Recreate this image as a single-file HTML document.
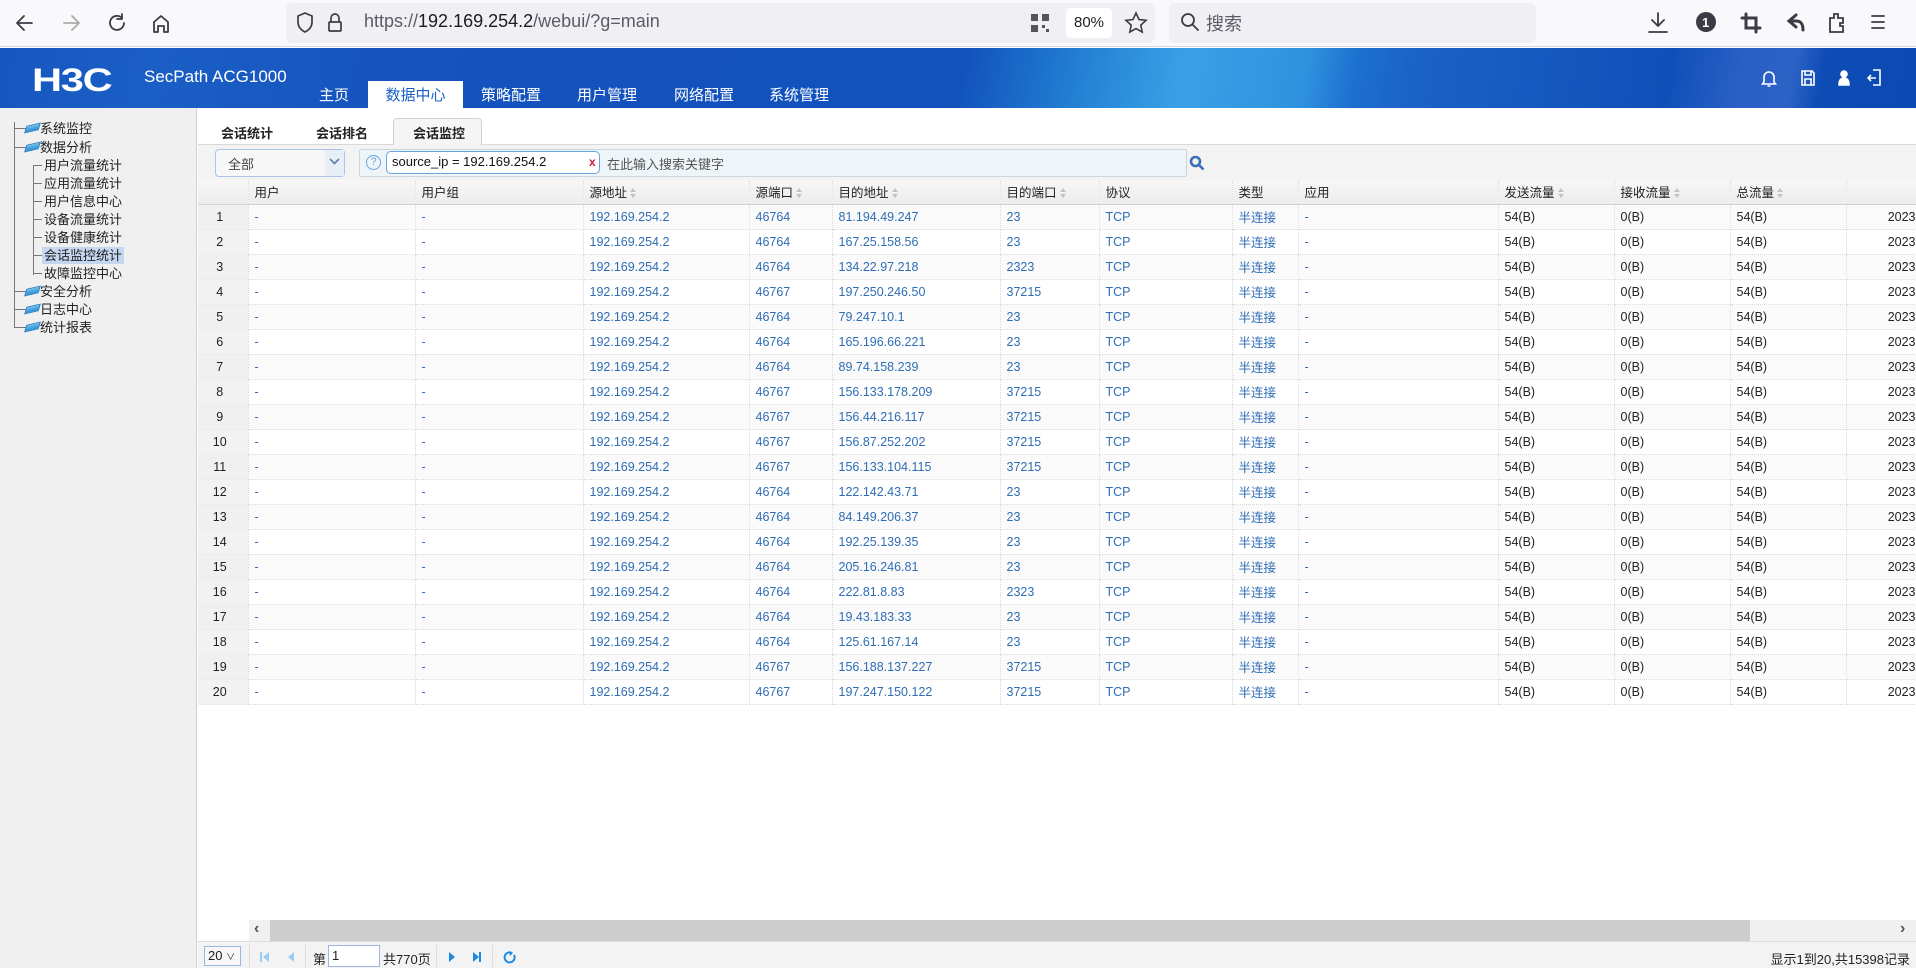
<!DOCTYPE html>
<html><head><meta charset="utf-8">
<style>
*{box-sizing:border-box;margin:0;padding:0}
body{width:1916px;height:968px;overflow:hidden;background:#fff;font-family:"Liberation Sans","Noto Sans CJK SC",sans-serif;font-size:13px;color:#222;position:relative}
.abs{position:absolute}
#bar{left:0;top:0;width:1916px;height:47px;background:#f9f9fb;border-bottom:1px solid #d6d6dc}
#url{left:286px;top:3px;width:869px;height:40px;background:#f0f0f4;border-radius:6px}
#srch{left:1169px;top:3px;width:367px;height:40px;background:#f0f0f4;border-radius:6px}
#hdr{left:0;top:48px;width:1916px;height:60px;background:linear-gradient(100deg,#1656c0 0px,#1a5fc6 150px,#1553bd 400px,#1152bc 950px,#2585d6 1080px,#3aa0e6 1170px,#2f92df 1290px,#1d6fcf 1340px,#1a62c6 1400px,#0f50b8 1650px,#2a60c5 1720px,#2c62c6 1770px,#0d4cb5 1800px,#0b4ab2 1916px)}
.nav{position:absolute;top:81px;height:27px;line-height:29px;color:#fff;font-size:15px;text-align:center}
#side{left:0;top:108px;width:197px;height:860px;background:#f0f0f0;border-right:1px solid #d0d0d0}
.ti{position:absolute;font-size:13px;color:#222;line-height:17px;white-space:nowrap}
.fold{position:absolute;width:13px;height:8px;background:linear-gradient(#6fc0ee,#2a8fd6);transform:skewX(-30deg) rotate(-15deg);border:1px solid #2a7cc0}
th,td{font-weight:normal;text-align:left;white-space:nowrap;overflow:hidden}
#tbl{position:absolute;left:198px;top:180px;border-collapse:collapse;table-layout:fixed;width:1718px}
#tbl th{height:24px;background:linear-gradient(#f7f7f7,#ececec);border-bottom:1px solid #d2d2d2;border-right:1px dotted #d8d8d8;padding-left:6px;font-size:12.5px;color:#222}
#tbl td{height:25px;border-bottom:1px dotted #d8d8d8;border-right:1px dotted #d8d8d8;padding-left:6px;color:#2f6db5;font-size:12.5px}
#tbl td.i{background:#f2f2f2;color:#222;text-align:center;padding-left:0;padding-right:6px}
#tbl td.b{color:#222}
#tbl tr:nth-child(even) td{background:#fafafa}
#tbl tr:nth-child(even) td.i{background:#f0f0f0}
.s{display:inline-block;width:7px;height:11px;vertical-align:middle;margin-left:3px;position:relative}
.s:before{content:"";position:absolute;left:0;top:0;border:3.5px solid transparent;border-bottom:4px solid #c4c4c4;border-top:0}
.s:after{content:"";position:absolute;left:0;top:6px;border:3.5px solid transparent;border-top:4px solid #c4c4c4;border-bottom:0}
</style></head><body>

<div id="bar" class="abs"></div>
<svg class="abs" style="left:14px;top:12px" width="160" height="22" viewBox="0 0 160 22" fill="none" stroke="#3b3b45" stroke-width="1.8" stroke-linecap="round" stroke-linejoin="round">
<path d="M18 11H4M10 4L3 11l7 7"/>
<path d="M50 11h14M58 4l7 7-7 7" stroke="#aaa"/>
<path d="M108 6a7 7 0 1 0 2 5M108 2v5h-5"/>
<path d="M140 10l7-6 7 6v10h-4v-6h-6v6h-4z"/>
</svg>
<div id="url" class="abs"></div>
<svg class="abs" style="left:296px;top:11px" width="60" height="24" fill="none" stroke="#3b3b45" stroke-width="1.7"><path d="M9 2l7 3v6c0 5-3 8-7 10-4-2-7-5-7-10V5z"/><rect x="33" y="11" width="12" height="9" rx="1"/><path d="M35 11V7a4 4 0 0 1 8 0v4"/></svg>
<div class="abs" style="left:364px;top:11px;font-size:18px;color:#5b5b66">https://<span style="color:#1c1b22">192.169.254.2</span>/webui/?g=main</div>
<svg class="abs" style="left:1030px;top:13px" width="20" height="20" fill="#555"><rect x="1" y="1" width="7" height="7"/><rect x="12" y="1" width="7" height="7"/><rect x="1" y="12" width="7" height="7"/><rect x="12" y="12" width="3" height="3"/><rect x="16" y="16" width="3" height="3"/></svg>
<div class="abs" style="left:1066px;top:8px;width:46px;height:30px;background:#fff;border-radius:4px;text-align:center;line-height:30px;font-size:15px">80%</div>
<svg class="abs" style="left:1124px;top:11px" width="24" height="24" fill="none" stroke="#3b3b45" stroke-width="1.6"><path d="M12 2l3 6.5 7 .8-5.2 4.8 1.4 7L12 17.6 5.8 21.1l1.4-7L2 9.3l7-.8z"/></svg>
<div id="srch" class="abs"></div>
<svg class="abs" style="left:1180px;top:12px" width="20" height="20" fill="none" stroke="#3b3b45" stroke-width="1.8"><circle cx="8" cy="8" r="6"/><path d="M12.5 12.5l6 6"/></svg>
<div class="abs" style="left:1206px;top:10px;font-size:18px;color:#5b5b66">搜索</div>
<svg class="abs" style="left:1646px;top:10px" width="250" height="26" fill="none" stroke="#3b3b45" stroke-width="1.8" stroke-linecap="round">
<path d="M12 3v13M6 10l6 6 6-6M3 22h18"/>
<circle cx="60" cy="12" r="10" fill="#3b3b45" stroke="none"/><text x="56" y="17" fill="#fff" stroke="none" font-size="13" font-weight="bold" font-family="Liberation Sans">1</text>
<path d="M100 4v14h14M96 8h14v14" stroke-width="3"/>
<path d="M150 5l-7 6 7 6M143 11h7c5 0 7 3 7 9" stroke-width="3"/>
<path d="M184 8h4V4h4v4h5v5h-3v3h3v6h-13z"/>
<path d="M226 6h12M226 12h12M226 18h12"/>
</svg>

<div id="hdr" class="abs"></div>
<div class="abs" style="left:32px;top:62px;font-size:32px;font-weight:bold;color:#fff;letter-spacing:-1px;font-family:'Liberation Sans',sans-serif;transform:scaleX(1.3);transform-origin:left">H3C</div>
<div class="abs" style="left:144px;top:67px;font-size:17px;color:#fff">SecPath ACG1000</div>
<div class="nav" style="left:314px;width:40px">主页</div>
<div class="nav" style="left:368px;width:95px;background:#fff;color:#1a5fc6">数据中心</div>
<div class="nav" style="left:476px;width:70px">策略配置</div>
<div class="nav" style="left:572px;width:70px">用户管理</div>
<div class="nav" style="left:669px;width:70px">网络配置</div>
<div class="nav" style="left:764px;width:70px">系统管理</div>
<svg class="abs" style="left:1760px;top:68px" width="130" height="20" fill="none" stroke="#fff" stroke-width="1.6">
<path d="M4 14V9a5 5 0 0 1 10 0v5l1.5 2h-13zM7.5 18h3"/>
<path d="M42 3h10l2 2v12H42z M45 3v4h6V3 M45 11h6v6h-6z"/>
<circle cx="84" cy="6" r="3" fill="#fff"/><path d="M79 17c0-5 2-7 5-7s5 2 5 7z" fill="#fff"/>
<path d="M113 2h7v15h-7M108 10h8M111 7l-3 3 3 3"/>
</svg>

<div id="side" class="abs"></div>
<div class="abs" style="left:14px;top:122px;width:1px;height:206px;background:#777"></div>
<div class="abs" style="left:33px;top:165px;width:1px;height:110px;background:#777"></div>
<div class="abs" style="left:14px;top:128px;width:12px;height:1px;background:#777"></div>
<div class="abs" style="left:14px;top:147px;width:12px;height:1px;background:#777"></div>
<div class="abs" style="left:14px;top:291px;width:12px;height:1px;background:#777"></div>
<div class="abs" style="left:14px;top:309px;width:12px;height:1px;background:#777"></div>
<div class="abs" style="left:14px;top:327px;width:12px;height:1px;background:#777"></div>
<div class="fold" style="left:26px;top:124px"></div>
<div class="fold" style="left:26px;top:143px"></div>
<div class="fold" style="left:26px;top:287px"></div>
<div class="fold" style="left:26px;top:305px"></div>
<div class="fold" style="left:26px;top:323px"></div>
<div class="ti" style="left:40px;top:120px">系统监控</div>
<div class="ti" style="left:40px;top:139px">数据分析</div>
<div class="ti" style="left:40px;top:283px">安全分析</div>
<div class="ti" style="left:40px;top:301px">日志中心</div>
<div class="ti" style="left:40px;top:319px">统计报表</div>
<div class="abs" style="left:33px;top:165px;width:9px;height:1px;background:#777"></div>
<div class="abs" style="left:33px;top:183px;width:9px;height:1px;background:#777"></div>
<div class="abs" style="left:33px;top:201px;width:9px;height:1px;background:#777"></div>
<div class="abs" style="left:33px;top:219px;width:9px;height:1px;background:#777"></div>
<div class="abs" style="left:33px;top:237px;width:9px;height:1px;background:#777"></div>
<div class="abs" style="left:33px;top:255px;width:9px;height:1px;background:#777"></div>
<div class="abs" style="left:33px;top:273px;width:9px;height:1px;background:#777"></div>
<div class="ti" style="left:44px;top:157px">用户流量统计</div>
<div class="ti" style="left:44px;top:175px">应用流量统计</div>
<div class="ti" style="left:44px;top:193px">用户信息中心</div>
<div class="ti" style="left:44px;top:211px">设备流量统计</div>
<div class="ti" style="left:44px;top:229px">设备健康统计</div>
<div class="ti" style="left:42px;top:247px;background:#c5d7f0;padding:0 2px">会话监控统计</div>
<div class="ti" style="left:44px;top:265px">故障监控中心</div>

<!-- tabs -->
<div class="abs" style="left:198px;top:144px;width:1718px;height:1px;background:#d8d8d8"></div>
<div class="abs" style="left:393px;top:118px;width:89px;height:27px;background:#f5f5f5;border:1px solid #d0d0d0;border-bottom:none;border-radius:4px 4px 0 0"></div>
<div class="abs" style="left:221px;top:123px;font-size:13px;font-weight:bold">会话统计</div>
<div class="abs" style="left:316px;top:123px;font-size:13px;font-weight:bold">会话排名</div>
<div class="abs" style="left:413px;top:123px;font-size:13px;font-weight:bold">会话监控</div>
<div class="abs" style="left:198px;top:145px;width:1718px;height:35px;background:#f3f3f3"></div>
<div class="abs" style="left:215px;top:149px;width:130px;height:28px;background:#f7f7f7;border:1px solid #a9c4e6;border-radius:4px"></div>
<div class="abs" style="left:325px;top:150px;width:19px;height:26px;background:#e8eef6"></div>
<svg class="abs" style="left:329px;top:158px" width="11" height="8" fill="none" stroke="#5a7fb0" stroke-width="1.6"><path d="M1 1l4.5 4.5L10 1"/></svg>
<div class="abs" style="left:228px;top:154px;font-size:13px;color:#444">全部</div>
<div class="abs" style="left:359px;top:149px;width:828px;height:28px;background:#eef5f9;border:1px solid #c9d6e0;border-radius:2px"></div>
<div class="abs" style="left:366px;top:155px;width:15px;height:15px;border:1.5px solid #6aa4df;border-radius:50%;color:#6aa4df;font-size:11px;text-align:center;line-height:12px">?</div>
<div class="abs" style="left:386px;top:151px;width:214px;height:23px;background:#fff;border:1.5px solid #6aa4df;border-radius:5px"></div>
<div class="abs" style="left:392px;top:154px;font-size:13px;color:#111">source_ip = 192.169.254.2</div>
<div class="abs" style="left:589px;top:155px;font-size:12px;color:#d01a3a;font-weight:bold">x</div>
<div class="abs" style="left:607px;top:154px;font-size:13px;color:#555">在此输入搜索关键字</div>
<svg class="abs" style="left:1189px;top:155px" width="16" height="16" fill="none" stroke="#3d6eb8" stroke-width="2.6"><circle cx="6.5" cy="6.5" r="4.5"/><path d="M10 10l4.5 4.5"/></svg>

<table id="tbl">
<colgroup><col style="width:50px"><col style="width:167px"><col style="width:168px"><col style="width:166px"><col style="width:83px"><col style="width:168px"><col style="width:99px"><col style="width:133px"><col style="width:66px"><col style="width:200px"><col style="width:116px"><col style="width:116px"><col style="width:116px"><col style="width:70px"></colgroup>
<tr><th></th><th>用户</th><th>用户组</th><th>源地址<span class="s"></span></th><th>源端口<span class="s"></span></th><th>目的地址<span class="s"></span></th><th>目的端口<span class="s"></span></th><th>协议</th><th>类型</th><th>应用</th><th>发送流量<span class="s"></span></th><th>接收流量<span class="s"></span></th><th>总流量<span class="s"></span></th><th></th></tr>
<tr><td class="i">1</td><td>-</td><td>-</td><td>192.169.254.2</td><td>46764</td><td>81.194.49.247</td><td>23</td><td>TCP</td><td>半连接</td><td>-</td><td class="b">54(B)</td><td class="b">0(B)</td><td class="b">54(B)</td><td class="b" style="text-align:right;padding-right:0">2023</td></tr>
<tr><td class="i">2</td><td>-</td><td>-</td><td>192.169.254.2</td><td>46764</td><td>167.25.158.56</td><td>23</td><td>TCP</td><td>半连接</td><td>-</td><td class="b">54(B)</td><td class="b">0(B)</td><td class="b">54(B)</td><td class="b" style="text-align:right;padding-right:0">2023</td></tr>
<tr><td class="i">3</td><td>-</td><td>-</td><td>192.169.254.2</td><td>46764</td><td>134.22.97.218</td><td>2323</td><td>TCP</td><td>半连接</td><td>-</td><td class="b">54(B)</td><td class="b">0(B)</td><td class="b">54(B)</td><td class="b" style="text-align:right;padding-right:0">2023</td></tr>
<tr><td class="i">4</td><td>-</td><td>-</td><td>192.169.254.2</td><td>46767</td><td>197.250.246.50</td><td>37215</td><td>TCP</td><td>半连接</td><td>-</td><td class="b">54(B)</td><td class="b">0(B)</td><td class="b">54(B)</td><td class="b" style="text-align:right;padding-right:0">2023</td></tr>
<tr><td class="i">5</td><td>-</td><td>-</td><td>192.169.254.2</td><td>46764</td><td>79.247.10.1</td><td>23</td><td>TCP</td><td>半连接</td><td>-</td><td class="b">54(B)</td><td class="b">0(B)</td><td class="b">54(B)</td><td class="b" style="text-align:right;padding-right:0">2023</td></tr>
<tr><td class="i">6</td><td>-</td><td>-</td><td>192.169.254.2</td><td>46764</td><td>165.196.66.221</td><td>23</td><td>TCP</td><td>半连接</td><td>-</td><td class="b">54(B)</td><td class="b">0(B)</td><td class="b">54(B)</td><td class="b" style="text-align:right;padding-right:0">2023</td></tr>
<tr><td class="i">7</td><td>-</td><td>-</td><td>192.169.254.2</td><td>46764</td><td>89.74.158.239</td><td>23</td><td>TCP</td><td>半连接</td><td>-</td><td class="b">54(B)</td><td class="b">0(B)</td><td class="b">54(B)</td><td class="b" style="text-align:right;padding-right:0">2023</td></tr>
<tr><td class="i">8</td><td>-</td><td>-</td><td>192.169.254.2</td><td>46767</td><td>156.133.178.209</td><td>37215</td><td>TCP</td><td>半连接</td><td>-</td><td class="b">54(B)</td><td class="b">0(B)</td><td class="b">54(B)</td><td class="b" style="text-align:right;padding-right:0">2023</td></tr>
<tr><td class="i">9</td><td>-</td><td>-</td><td>192.169.254.2</td><td>46767</td><td>156.44.216.117</td><td>37215</td><td>TCP</td><td>半连接</td><td>-</td><td class="b">54(B)</td><td class="b">0(B)</td><td class="b">54(B)</td><td class="b" style="text-align:right;padding-right:0">2023</td></tr>
<tr><td class="i">10</td><td>-</td><td>-</td><td>192.169.254.2</td><td>46767</td><td>156.87.252.202</td><td>37215</td><td>TCP</td><td>半连接</td><td>-</td><td class="b">54(B)</td><td class="b">0(B)</td><td class="b">54(B)</td><td class="b" style="text-align:right;padding-right:0">2023</td></tr>
<tr><td class="i">11</td><td>-</td><td>-</td><td>192.169.254.2</td><td>46767</td><td>156.133.104.115</td><td>37215</td><td>TCP</td><td>半连接</td><td>-</td><td class="b">54(B)</td><td class="b">0(B)</td><td class="b">54(B)</td><td class="b" style="text-align:right;padding-right:0">2023</td></tr>
<tr><td class="i">12</td><td>-</td><td>-</td><td>192.169.254.2</td><td>46764</td><td>122.142.43.71</td><td>23</td><td>TCP</td><td>半连接</td><td>-</td><td class="b">54(B)</td><td class="b">0(B)</td><td class="b">54(B)</td><td class="b" style="text-align:right;padding-right:0">2023</td></tr>
<tr><td class="i">13</td><td>-</td><td>-</td><td>192.169.254.2</td><td>46764</td><td>84.149.206.37</td><td>23</td><td>TCP</td><td>半连接</td><td>-</td><td class="b">54(B)</td><td class="b">0(B)</td><td class="b">54(B)</td><td class="b" style="text-align:right;padding-right:0">2023</td></tr>
<tr><td class="i">14</td><td>-</td><td>-</td><td>192.169.254.2</td><td>46764</td><td>192.25.139.35</td><td>23</td><td>TCP</td><td>半连接</td><td>-</td><td class="b">54(B)</td><td class="b">0(B)</td><td class="b">54(B)</td><td class="b" style="text-align:right;padding-right:0">2023</td></tr>
<tr><td class="i">15</td><td>-</td><td>-</td><td>192.169.254.2</td><td>46764</td><td>205.16.246.81</td><td>23</td><td>TCP</td><td>半连接</td><td>-</td><td class="b">54(B)</td><td class="b">0(B)</td><td class="b">54(B)</td><td class="b" style="text-align:right;padding-right:0">2023</td></tr>
<tr><td class="i">16</td><td>-</td><td>-</td><td>192.169.254.2</td><td>46764</td><td>222.81.8.83</td><td>2323</td><td>TCP</td><td>半连接</td><td>-</td><td class="b">54(B)</td><td class="b">0(B)</td><td class="b">54(B)</td><td class="b" style="text-align:right;padding-right:0">2023</td></tr>
<tr><td class="i">17</td><td>-</td><td>-</td><td>192.169.254.2</td><td>46764</td><td>19.43.183.33</td><td>23</td><td>TCP</td><td>半连接</td><td>-</td><td class="b">54(B)</td><td class="b">0(B)</td><td class="b">54(B)</td><td class="b" style="text-align:right;padding-right:0">2023</td></tr>
<tr><td class="i">18</td><td>-</td><td>-</td><td>192.169.254.2</td><td>46764</td><td>125.61.167.14</td><td>23</td><td>TCP</td><td>半连接</td><td>-</td><td class="b">54(B)</td><td class="b">0(B)</td><td class="b">54(B)</td><td class="b" style="text-align:right;padding-right:0">2023</td></tr>
<tr><td class="i">19</td><td>-</td><td>-</td><td>192.169.254.2</td><td>46767</td><td>156.188.137.227</td><td>37215</td><td>TCP</td><td>半连接</td><td>-</td><td class="b">54(B)</td><td class="b">0(B)</td><td class="b">54(B)</td><td class="b" style="text-align:right;padding-right:0">2023</td></tr>
<tr><td class="i">20</td><td>-</td><td>-</td><td>192.169.254.2</td><td>46767</td><td>197.247.150.122</td><td>37215</td><td>TCP</td><td>半连接</td><td>-</td><td class="b">54(B)</td><td class="b">0(B)</td><td class="b">54(B)</td><td class="b" style="text-align:right;padding-right:0">2023</td></tr>
</table>

<!-- scrollbar -->
<div class="abs" style="left:249px;top:920px;width:1667px;height:21px;background:#f0f0f0"></div>
<div class="abs" style="left:270px;top:920px;width:1480px;height:21px;background:#cdcdcd"></div>
<div class="abs" style="left:254px;top:920px;font-size:16px;color:#555;font-weight:bold">‹</div>
<div class="abs" style="left:1900px;top:920px;font-size:16px;color:#555;font-weight:bold">›</div>
<!-- pager -->
<div class="abs" style="left:198px;top:941px;width:1718px;height:27px;background:#f3f3f3;border-top:1px solid #ddd"></div>
<div class="abs" style="left:204px;top:946px;width:37px;height:20px;border:1px solid #9ab8e0;background:#f7f7f7;font-size:13px;padding-left:3px;line-height:18px">20 <span style="font-size:9px">∨</span></div>
<div class="abs" style="left:249px;top:945px;width:1px;height:22px;background:#ddd"></div>
<div class="abs" style="left:305px;top:945px;width:1px;height:22px;background:#ddd"></div>
<div class="abs" style="left:436px;top:945px;width:1px;height:22px;background:#ddd"></div>
<div class="abs" style="left:492px;top:945px;width:1px;height:22px;background:#ddd"></div>
<svg class="abs" style="left:260px;top:950px" width="260" height="14">
<rect x="0" y="2" width="2" height="10" fill="#9cccf0"/><path d="M9 2L3 7l6 5z" fill="#9cccf0"/>
<path d="M34 2l-6 5 6 5z" fill="#9cccf0"/>
<path d="M189 2l6 5-6 5z" fill="#1f8ae0"/>
<path d="M213 2l6 5-6 5z" fill="#1f8ae0"/><rect x="219" y="2" width="2" height="10" fill="#1f8ae0"/>
<path d="M252 3a5 5 0 1 0 2 2" fill="none" stroke="#1f8ae0" stroke-width="2"/><path d="M249 1l4 2-3 3z" fill="#1f8ae0"/>
</svg>
<div class="abs" style="left:313px;top:949px;font-size:13px">第</div>
<div class="abs" style="left:328px;top:945px;width:52px;height:22px;background:#fff;border:1px solid #9ab8e0;font-size:13px;padding-left:3px;line-height:20px">1</div>
<div class="abs" style="left:383px;top:949px;font-size:13px">共770页</div>
<div class="abs" style="right:6px;top:949px;font-size:13px">显示1到20,共15398记录</div>
</body></html>
